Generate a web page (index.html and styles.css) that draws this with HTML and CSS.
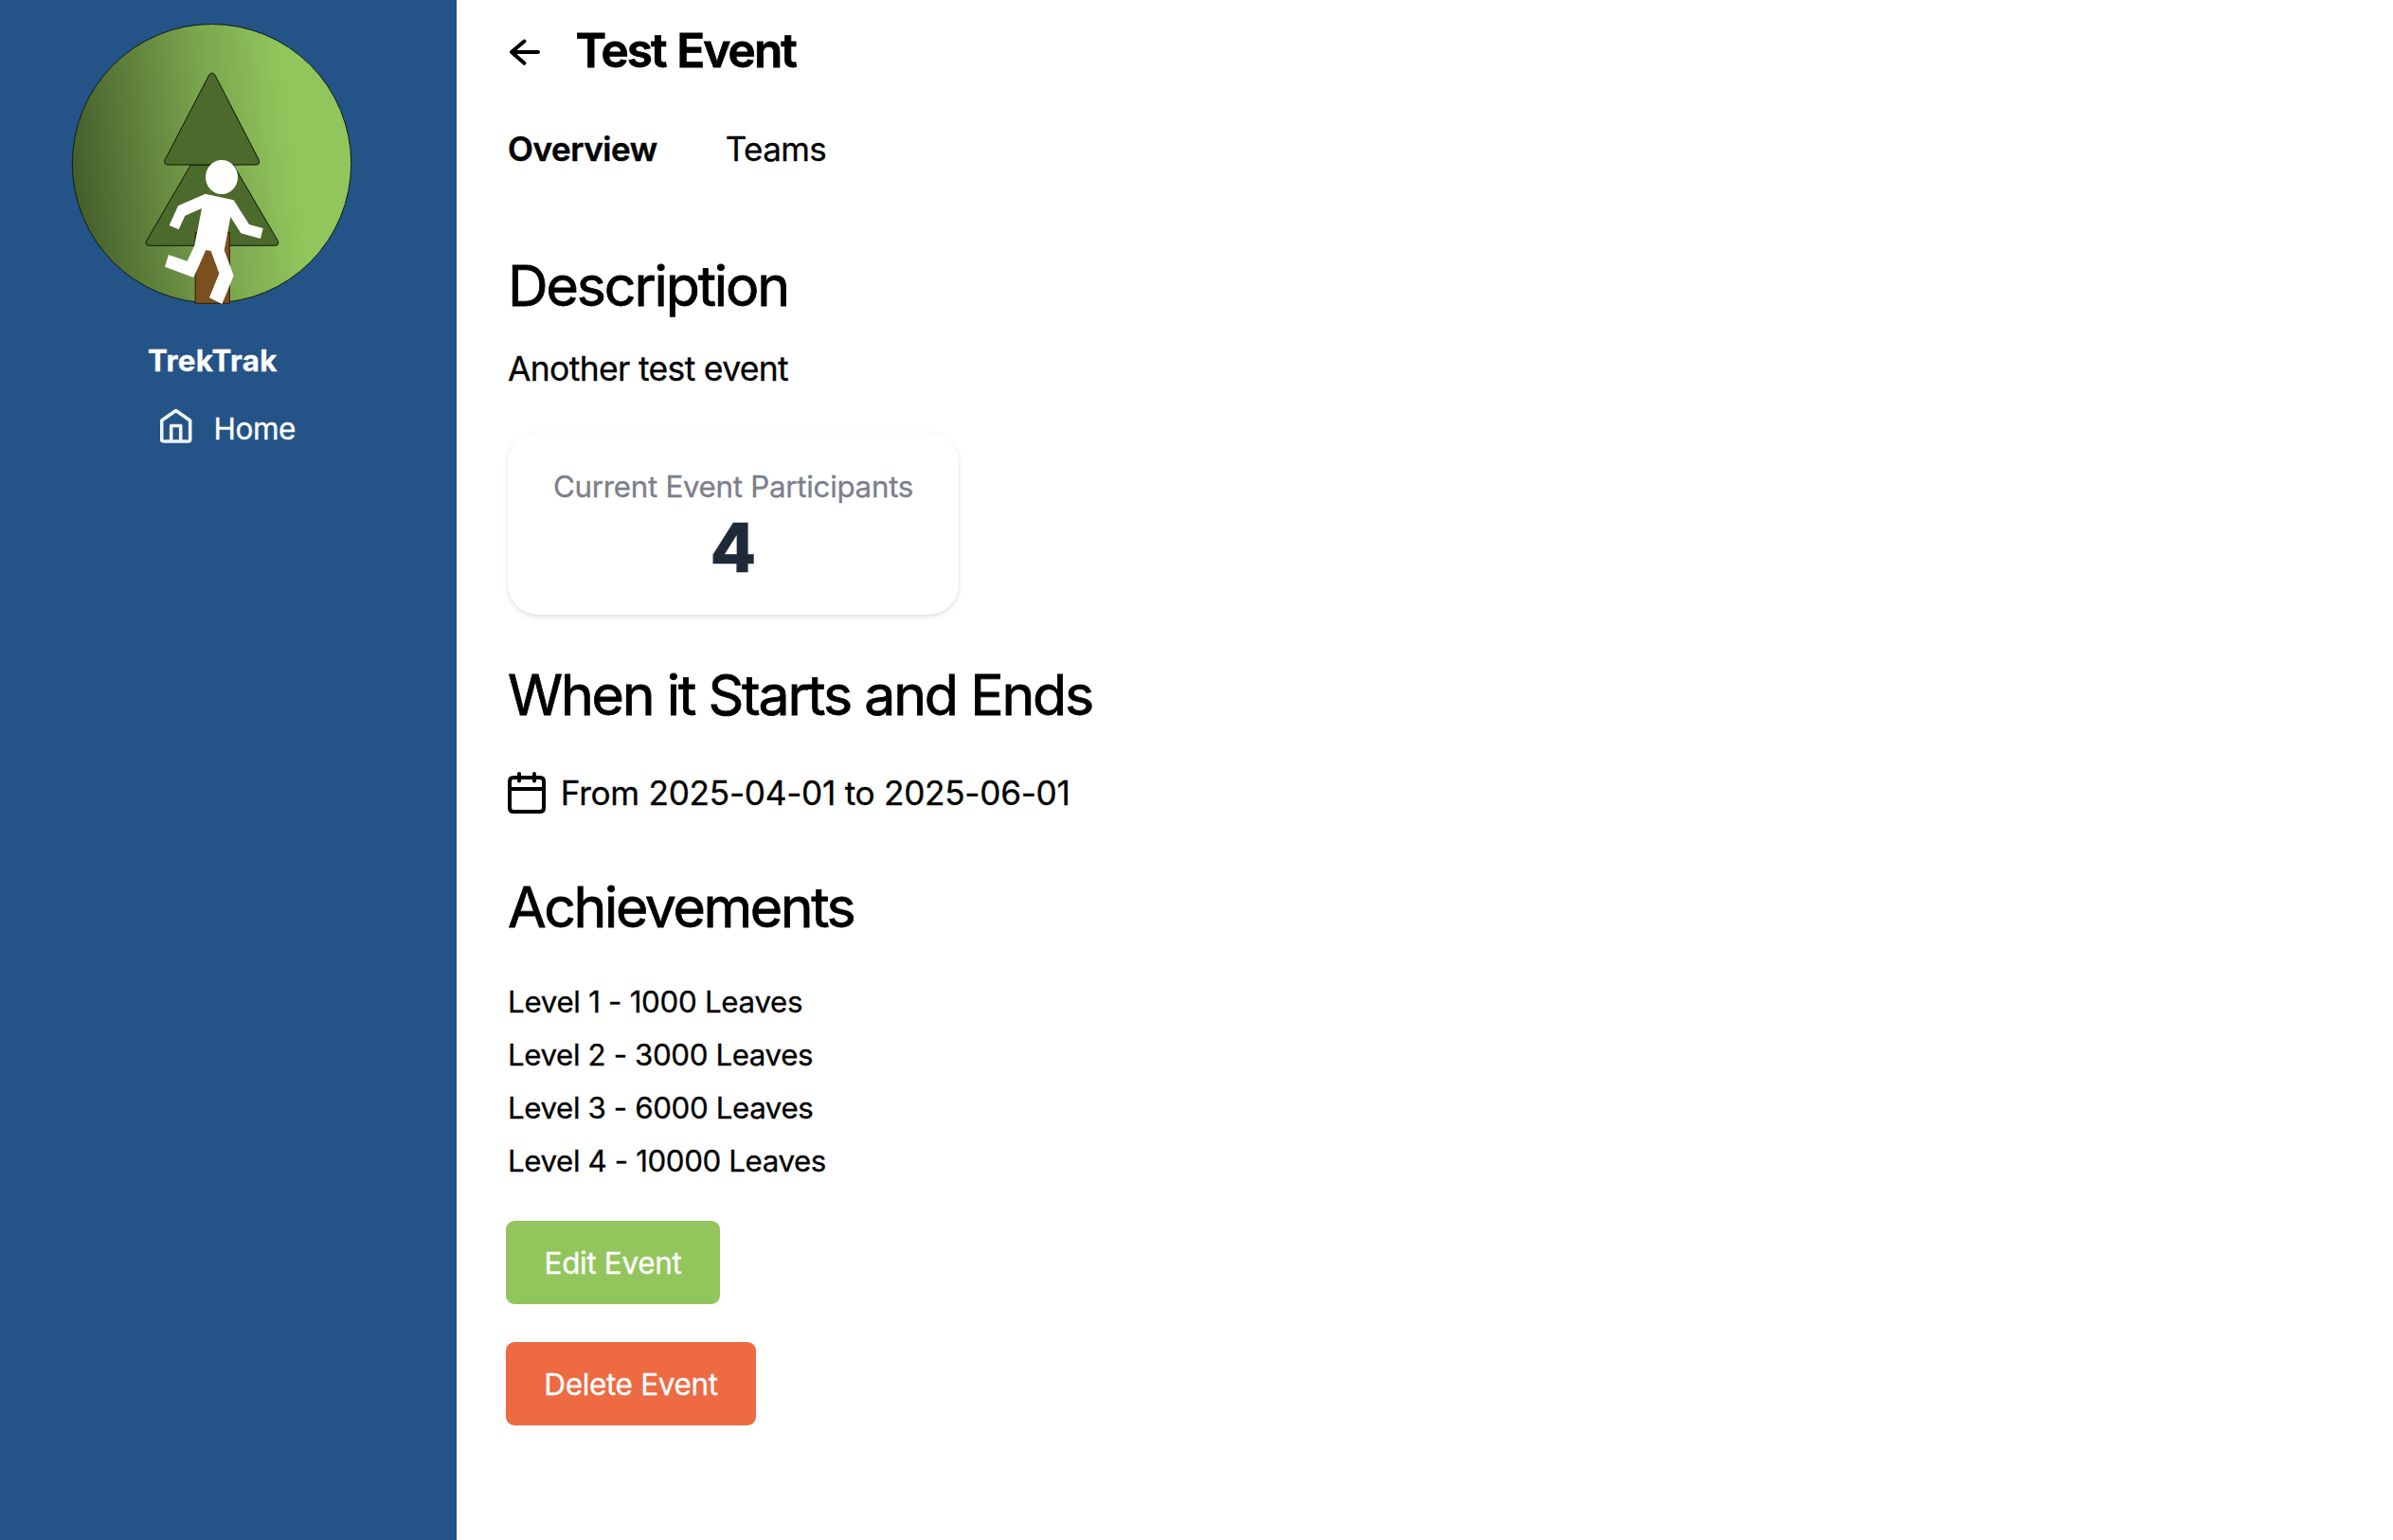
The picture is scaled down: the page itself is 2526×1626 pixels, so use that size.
FILE: index.html
```html
<!DOCTYPE html>
<html lang="en">
<head>
<meta charset="utf-8">
<title>Test Event - TrekTrak</title>
<link rel="stylesheet" href="styles.css">
</head>
<body>
<div class="app">
  <aside class="sidebar">
    <svg class="logo" viewBox="0 0 990 990" aria-hidden="true">
      <defs>
        <linearGradient id="sky" x1="0" y1="0.62" x2="1" y2="0.5">
          <stop offset="0" stop-color="#435c2a"/>
          <stop offset="0.5" stop-color="#7aa44d"/>
          <stop offset="0.8" stop-color="#91c65c"/>
        </linearGradient>
      </defs>
      <circle cx="490.500" cy="488" r="441.500" fill="url(#sky)" stroke="#111c11" stroke-width="3"/>
      <g fill="#4b6a2b" stroke="#0f160a" stroke-width="3">
        <path d="M424 492H559L700 733Q705 748 690 748H294Q278 748 284 733Z"/>
        <path d="M482 208Q491 194 501 208L640 477Q644 492 630 492H353Q338 492 342 477Z"/>
      </g>
      <path d="M438.500 706H547V931H438.500Z" fill="#7b501f" stroke="#2c1c0a" stroke-width="3"/>
      <g fill="#fff">
        <ellipse cx="522" cy="531" rx="51" ry="54"/>
        <path d="M470 584L560 604L609 681L653 693L645 726L583 709L550 657L530 763L560 843L523 933L483 913L514 836L488 765L472 762L433 849L342 815L354 777L413 797L436 748L459 630L406 653L386 697L356 684L384 622Z"/>
      </g>
    </svg>
    <div class="brand">TrekTrak</div>
    <nav class="nav">
      <svg class="home-icon" viewBox="0 0 34 38" aria-hidden="true">
        <path d="M1.700 13L16.700 2.500L31.700 13V33Q31.700 35 29.500 35H4Q1.700 35 1.700 33ZM11.700 35V18.500H21.700V35" fill="none" stroke="#f0f4f9" stroke-width="3.600" stroke-linejoin="round"/>
      </svg>
      <span class="nav-label">Home</span>
    </nav>
  </aside>
  <main class="content">
    <header class="header">
      <svg class="back" viewBox="0 0 34 34" aria-hidden="true">
        <path d="M4 17H32M17.500 5.500L4 17L17.500 28.800" fill="none" stroke="#000" stroke-width="4" stroke-linecap="round" stroke-linejoin="round"/>
      </svg>
      <h1 class="title">Test Event</h1>
    </header>
    <div class="tabs">
      <span class="tab tab-active">Overview</span>
      <span class="tab">Teams</span>
    </div>
    <h2 class="heading description">Description</h2>
    <p class="summary">Another test event</p>
    <section class="card">
      <div class="card-label">Current Event Participants</div>
      <div class="card-value">4</div>
    </section>
    <h2 class="heading when">When it Starts and Ends</h2>
    <div class="dates">
      <svg class="calendar" viewBox="0 0 40 44" aria-hidden="true">
        <path d="M6 6H34Q38 6 38 10V38Q38 42 34 42H6Q2 42 2 38V10Q2 6 6 6ZM2 18H38M12 2V9.500M28 2V9.500" fill="none" stroke="#000" stroke-width="4" stroke-linecap="round"/>
      </svg>
      <span class="range">From 2025-04-01 to 2025-06-01</span>
    </div>
    <h2 class="heading achievements">Achievements</h2>
    <ul class="levels">
      <li class="level-first">Level 1 - 1000 Leaves</li>
      <li>Level 2 - 3000 Leaves</li>
      <li>Level 3 - 6000 Leaves</li>
      <li>Level 4 - 10000 Leaves</li>
    </ul>
    <div class="actions">
      <button class="button edit">Edit Event</button>
      <button class="button delete">Delete Event</button>
    </div>
  </main>
</div>
</body>
</html>
```

FILE: styles.css
```css
* { box-sizing: border-box; margin: 0; padding: 0; }
body { font-family: Inter, sans-serif; color: #000; background: #fff; white-space: nowrap; -webkit-text-stroke: 0.3px currentColor; }
.app { display: flex; min-height: 1626px; }

.sidebar { width: 482px; flex: none; background: #245388; color: #fff; padding-top: 10px; }
.logo { display: block; width: 330px; height: 330px; margin-left: 60px; }
.brand { margin: 17px 0 0 156px; font-size: 31.3px; font-weight: 700; line-height: 48px; letter-spacing: 0.35px; }
.nav { display: flex; align-items: flex-start; margin: 24px 0 0 169px; }
.home-icon { width: 34px; height: 38px; margin-top: 2px; }
.nav-label { margin-left: 22.5px; font-size: 31.5px; line-height: 48px; letter-spacing: -0.45px; }

.content { flex: 1; padding: 17px 0 0 54px; }
.header { display: flex; height: 72px; }
.back { width: 34px; height: 34px; margin-top: 20.5px; }
.title { margin-left: 37.5px; font-size: 49.5px; font-weight: 600; line-height: 72px; letter-spacing: -1.9px; word-spacing: 1px; -webkit-text-stroke-width: 0.8px; }
.tabs { display: flex; gap: 72px; margin-top: 42px; font-size: 35px; line-height: 52px; letter-spacing: -0.65px; }
.tab-active { font-weight: 600; letter-spacing: -0.42px; -webkit-text-stroke-width: 0.5px; }
.heading { font-size: 59px; font-weight: 400; line-height: 72px; letter-spacing: -2.2px; -webkit-text-stroke-width: 0.8px; }
.description { margin-top: 83px; letter-spacing: -2.1px; }
.summary { margin-top: 26px; font-size: 35.5px; line-height: 52px; letter-spacing: -0.68px; }
.card { width: 476px; height: 192px; margin-top: 41px; padding-top: 33px; border-radius: 32px; text-align: center; box-shadow: 0 2px 6px rgba(0, 0, 0, 0.1), 0 2px 4px -2px rgba(0, 0, 0, 0.1); }
.card-label { color: #7b808a; font-size: 31.3px; line-height: 48px; letter-spacing: -0.28px; }
.card-value { margin-top: 4px; color: #1f2937; font-size: 71px; font-weight: 800; line-height: 72px; }
.when { margin-top: 49px; }
.dates { display: flex; margin-top: 41px; }
.calendar { width: 40px; height: 44px; margin-top: 4px; }
.range { margin-left: 15.7px; font-size: 35.2px; line-height: 52px; letter-spacing: -0.28px; }
.achievements { margin-top: 59px; letter-spacing: -2.4px; }
.levels { list-style: none; margin-top: 36px; font-size: 31.3px; line-height: 56px; letter-spacing: -0.4px; }
.level-first { letter-spacing: -0.3px; }
.actions { display: flex; flex-direction: column; align-items: flex-start; gap: 40px; margin: 35px 0 0 -2px; }
.button { height: 88px; padding: 1px 0 0; border: 0; border-radius: 9px; color: #fff; font: 400 31.5px/48px Inter, sans-serif; letter-spacing: -0.35px; }
.edit { width: 226px; background: #92c65c; }
.delete { width: 264px; background: #ed6a43; }
```
